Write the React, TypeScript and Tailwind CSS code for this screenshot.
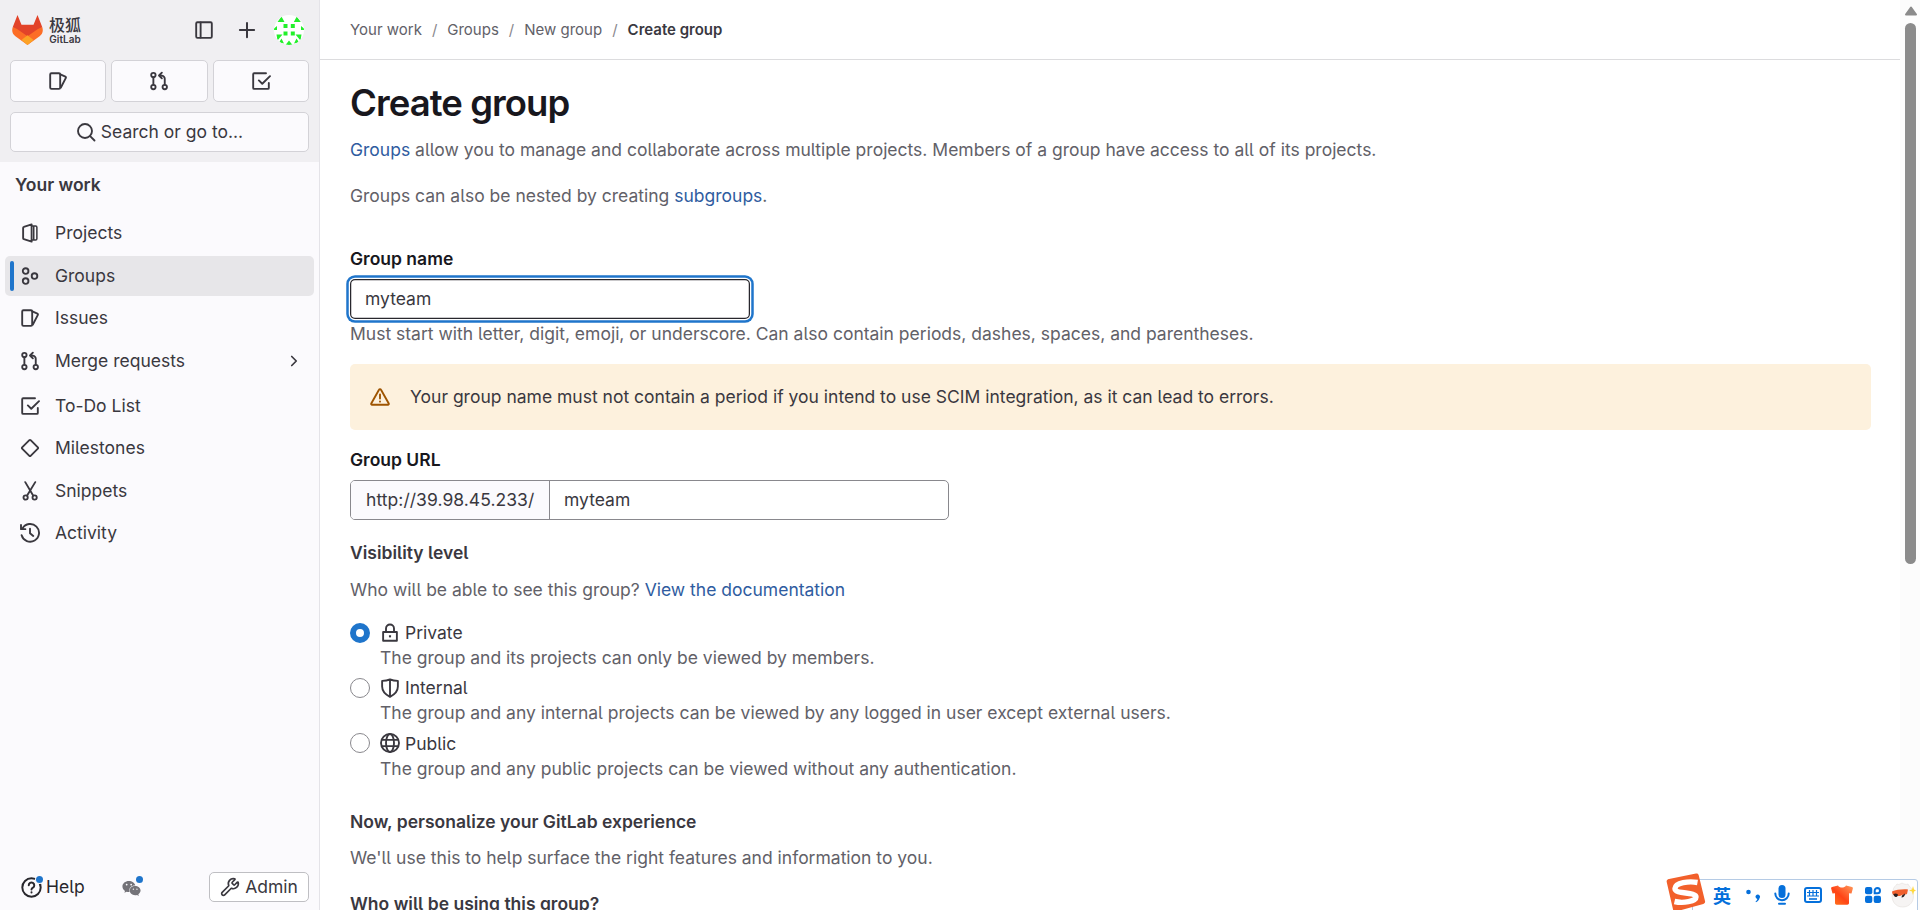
import type { ReactNode } from "react";
import { Wrench } from "lucide-react";
import { FaWeixin } from "react-icons/fa";

function Icon({ children, className = "size-5" }: { children: ReactNode; className?: string }) {
  return (
    <svg
      viewBox="0 0 16 16"
      className={`shrink-0 ${className}`}
      fill="none"
      stroke="currentColor"
      strokeWidth="1.5"
      strokeLinecap="round"
      strokeLinejoin="round"
    >
      {children}
    </svg>
  );
}

const ProjectIcon = () => (
  <Icon>
    <path d="M9.3 1.1 3.1 3.1a.8.8 0 0 0-.6.8v8.2c0 .4.2.7.6.8l6.2 2z" />
    <path d="M9.3 2.4h3.2c.6 0 1 .4 1 1v9.2c0 .6-.4 1-1 1H9.3M11 2.6v10.8" strokeWidth="1.2" />
  </Icon>
);
const GroupIcon = () => (
  <Icon>
    <circle cx="4.5" cy="4" r="2.25" />
    <circle cx="4.5" cy="12" r="2.25" />
    <circle cx="11.6" cy="8" r="2.25" />
  </Icon>
);
const IssuesIcon = () => (
  <Icon>
    <rect x="1.75" y="1.75" width="8" height="12.5" rx="1" />
    <path d="m9.9 2.7 4 1.8c.4.2.6.6.4 1L10.3 13.2" />
  </Icon>
);
const MergeIcon = () => (
  <Icon>
    <circle cx="3.5" cy="3.2" r="1.75" />
    <circle cx="3.5" cy="12.8" r="1.75" />
    <circle cx="12.6" cy="12.8" r="1.75" />
    <path d="M3.5 5v6M12.6 11V6.2a2.5 2.5 0 0 0-2.5-2.5H8.5M10.3 1.3 8 3.6l2.3 2.3" />
  </Icon>
);
const TodoIcon = () => (
  <Icon>
    <path d="M12 1.75H2.5a.75.75 0 0 0-.75.75v11c0 .41.34.75.75.75h11a.75.75 0 0 0 .75-.75V9.5M6.3 7.5 9 10.2l6.2-6.1" />
  </Icon>
);
const MilestoneIcon = () => (
  <Icon>
    <path d="M7.5 1.7a.7.7 0 0 1 1 0l5.8 5.8a.7.7 0 0 1 0 1l-5.8 5.8a.7.7 0 0 1-1 0L1.7 8.5a.7.7 0 0 1 0-1z" />
  </Icon>
);
const SnippetIcon = () => (
  <Icon>
    <path d="m4.2.9 6.3 10.7M12.2.9 5.7 11.6" />
    <circle cx="4.5" cy="13.2" r="1.7" />
    <circle cx="11.7" cy="13.2" r="1.7" />
  </Icon>
);
const ActivityIcon = () => (
  <Icon>
    <path d="M1.3 9.8A7.1 7.1 0 1 0 2 4.3M.8 1.6v3.3h3.5M8 4.5v3.7l2.6 2.2" />
  </Icon>
);

const shortcutButton =
  "flex h-[42px] flex-1 items-center justify-center rounded-[5px] border border-[#d3d2d7] bg-[#fbfafd]";

function Avatar() {
  return (
    <svg viewBox="0 0 30 30" className="size-[30px]">
      <defs>
        <clipPath id="round">
          <circle cx="15" cy="15" r="15" />
        </clipPath>
      </defs>
      <g clipPath="url(#round)">
        <path d="M0 0h30v30H0z" fill="#fff" />
        <path
          fill="#22f02a"
          d="M9.5 9h4v4h-4zM16.8 9h4v4h-4zM9.5 16.5h4v4h-4zM16.8 16.5h4v4h-4zM3.5 7 7.5 1.5 10.5 7zM26.8 7l-4-5.5L19.8 7zM0 15v-1.5l3-2.5v4zM30 15v-1.5l-3-2.5v4zM2.5 19.5h6L3.5 25.5zM27.5 19.5h-6l5 6zM7.5 23.5 10 28.5l-5-1zM22.5 23.5 20 28.5l5-1zM15 25.5l3.5 4.5h-7z"
        />
      </g>
    </svg>
  );
}

function NavItem({ icon, label, active, chevron }: { icon: ReactNode; label: string; active?: boolean; chevron?: boolean }) {
  return (
    <a className={`flex h-10 items-center rounded-[5px] pl-[5px] ${active ? "bg-[#e7e6e9]" : ""}`}>
      <span className={`mr-[6px] h-[30px] w-1 rounded-full ${active ? "bg-[#1f75cb]" : ""}`} />
      {icon}
      <span className="ml-[15px] flex-1 pt-[1px]">{label}</span>
      {chevron && (
        <Icon className="mr-[11px] size-[18px]">
          <path d="m6 4 4 4-4 4" />
        </Icon>
      )}
    </a>
  );
}

function Sidebar() {
  return (
    <aside className="flex w-80 shrink-0 flex-col border-r border-[#e4e3e8] bg-[#fbfafd]">
      <div className="h-[162px] bg-[#f0eff2] px-[10px]">
        <div className="flex h-[60px] items-center pl-[2px]">
          <svg viewBox="0 0 31 30" className="h-[30px] w-[31px]">
            <path fill="#e24329" d="M5.5 0 .7 12.2 15.5 23.5 30.3 12.2 25.5 0l-4 9.7h-12z" />
            <path fill="#fc6d26" d="M.7 12.2C-.6 16.5.8 19.3 3.4 21.3l12.1 8.7 12.1-8.7c2.6-2 4-4.8 2.7-9.1-2.3.5-4.3 1.5-6.2 3l-8.6 6-8.6-6c-1.9-1.5-3.9-2.5-6.2-3z" />
            <path fill="#fca326" d="m15.5 20.2 6 4.8-6 5-6-5z" />
          </svg>
          <div className="ml-[6px] flex w-8 flex-col items-center font-medium text-[#3a383f]">
            <span className="-mt-[1px] mb-[1px] font-['Noto_Sans_CJK_SC',sans-serif] text-[16px] leading-[17px] whitespace-nowrap">极狐</span>
            <span className="text-[10px] leading-[10px] font-semibold">GitLab</span>
          </div>
          <div className="ml-auto flex items-center">
            <Icon>
              <rect x="1.75" y="1.75" width="12.5" height="12.5" rx="1" />
              <path d="M5.3 2v12" />
            </Icon>
            <Icon className="mr-[17px] ml-[23px] size-5">
              <path d="M8 2.3v11.4M2.3 8h11.4" strokeWidth="1.6" />
            </Icon>
            <div className="mr-[5px]">
              <Avatar />
            </div>
          </div>
        </div>
        <div className="flex gap-[5px]">
          <button className={shortcutButton}><IssuesIcon /></button>
          <button className={shortcutButton}><MergeIcon /></button>
          <button className={shortcutButton}><TodoIcon /></button>
        </div>
        <button className="mt-[10px] flex h-10 w-full items-center justify-center gap-[5px] rounded-[5px] border border-[#d3d2d7] bg-[#fbfafd]">
          <Icon>
            <circle cx="7.2" cy="7.2" r="5.6" />
            <path d="m11.3 11.3 3.5 3.5" />
          </Icon>
          Search or go to...
        </button>
      </div>
      <div className="mt-[10px] pl-[15px] leading-[25px] font-semibold">Your work</div>
      <nav className="mt-[16px] flex flex-col gap-[2.5px] px-[5px]">
        <NavItem icon={<ProjectIcon />} label="Projects" />
        <NavItem icon={<GroupIcon />} label="Groups" active />
        <NavItem icon={<IssuesIcon />} label="Issues" />
        <NavItem icon={<MergeIcon />} label="Merge requests" chevron />
        <div className="mt-[2.5px] flex flex-col gap-[2.5px]">
          <NavItem icon={<TodoIcon />} label="To-Do List" />
          <NavItem icon={<MilestoneIcon />} label="Milestones" />
          <NavItem icon={<SnippetIcon />} label="Snippets" />
          <NavItem icon={<ActivityIcon />} label="Activity" />
        </div>
      </nav>
      <div className="mt-auto mb-2 flex h-[30px] items-center pr-[10px] pl-[21px]">
        <div className="relative flex items-center gap-1 text-[#28272d]">
          <Icon className="size-[21px]">
            <circle cx="8" cy="8" r="7" />
            <path d="M5.9 6.3a2.1 2.1 0 1 1 3.2 1.8C8.4 8.5 8 8.8 8 9.5M8 11.7v.1" />
          </Icon>
          Help
          <span className="absolute top-[2px] left-[15px] size-[7px] rounded-full bg-[#1f75cb] ring-1 ring-[#fbfafd]" />
        </div>
        <div className="relative ml-[37px] text-[#737278]">
          <FaWeixin className="mt-[2px] size-[19px]" />
          <span className="absolute -top-[1px] left-[14px] size-[7px] rounded-full bg-[#1f75cb]" />
        </div>
        <button className="ml-auto flex h-[30px] w-[100px] items-center justify-center gap-[5px] rounded-[5px] border border-[#bfbfc3] bg-white">
          <Wrench className="size-5" strokeWidth={2} />
          Admin
        </button>
      </div>
    </aside>
  );
}

function Visibility({ icon, label, text, checked }: { icon: ReactNode; label: string; text: string; checked?: boolean }) {
  return (
    <label className="flex h-[55.25px] gap-[10px] leading-[25px]">
      <span
        className={`mt-[2.75px] size-5 shrink-0 rounded-full bg-white ${checked ? "border-[6px] border-[#1f75cb]" : "border border-[#89888d]"}`}
      />
      <span>
        <span className="flex items-center gap-[5px]">
          {icon}
          {label}
        </span>
        <span className="block text-[#626168]">{text}</span>
      </span>
    </label>
  );
}

const link = "text-[#2f5ca0]";

function Content() {
  return (
    <main className="min-w-0 flex-1">
      <div className="flex h-[60px] items-center gap-[10px] border-b border-[#dcdcde] pt-[2px] pl-[30px] text-[15px] text-[#626168]">
        <span>Your work</span>
        <span className="text-[#89888d]">/</span>
        <span>Groups</span>
        <span className="text-[#89888d]">/</span>
        <span>New group</span>
        <span className="text-[#89888d]">/</span>
        <span className="font-semibold text-[#3a383f]">Create group</span>
      </div>
      <div className="pr-[29px] pl-[30px] leading-[25px]">
        <h1 className="mt-[21px] text-[36.5px] leading-[44px] font-semibold tracking-[-0.026em] text-[#18171d]">
          Create group
        </h1>
        <p className="mt-[12px] text-[#626168]">
          <a className={link}>Groups</a> allow you to manage and collaborate across multiple projects. Members of a group
          have access to all of its projects.
        </p>
        <p className="mt-[21px] text-[#626168]">
          Groups can also be nested by creating <a className={link}>subgroups</a>.
        </p>
        <div className="mt-[38px] font-semibold text-[#18171d]">Group name</div>
        <div className="mt-[8px] flex h-10 w-[400px] items-center rounded-[5px] bg-white px-[15px] pb-[2px] shadow-[inset_0_0_0_1.25px_#28272d,0_0_0_1.25px_#fff,0_0_0_3.75px_#1f75cb]">
          myteam
        </div>
        <p className="mt-[2px] text-[#626168]">
          Must start with letter, digit, emoji, or underscore. Can also contain periods, dashes, spaces, and parentheses.
        </p>
        <div className="mt-[18px] flex h-[66px] items-center gap-5 rounded-[5px] bg-[#fdf1dd] pl-5">
          <Icon className="size-5 text-[#9e5400]">
            <path d="M7.2 2.2a.9.9 0 0 1 1.6 0l6.2 11a.7.7 0 0 1-.6 1H1.6a.7.7 0 0 1-.6-1zM8 6v3.2M8 11.6v.1" />
          </Icon>
          <span className="pb-[2px]">
            Your group name must not contain a period if you intend to use SCIM integration, as it can lead to errors.
          </span>
        </div>
        <div className="mt-[17px] font-semibold text-[#18171d]">Group URL</div>
        <div className="mt-[8px] flex h-10 w-[599px] overflow-hidden rounded-[5px] border border-[#89888d]">
          <div className="flex w-[199px] items-center border-r border-[#89888d] bg-[#fbfafd] pb-[2px] pl-[15px] tracking-[0.05px]">
            http://39.98.45.233/
          </div>
          <div className="flex flex-1 items-center pb-[2px] pl-[14px]">myteam</div>
        </div>
        <div className="mt-[20px] font-semibold">Visibility level</div>
        <p className="mt-[12px] text-[#626168]">
          Who will be able to see this group? <a className={link}>View the documentation</a>
        </p>
        <div className="mt-[18px]">
          <Visibility
            checked
            label="Private"
            text="The group and its projects can only be viewed by members."
            icon={
              <Icon>
                <path d="M2.5 7.2h11v7h-11zM4.8 7V4.4a3.2 3.2 0 0 1 6.4 0V7" />
                <path d="M8 9.8v1.7" strokeLinecap="butt" strokeWidth="1.7" />
              </Icon>
            }
          />
          <Visibility
            label="Internal"
            text="The group and any internal projects can be viewed by any logged in user except external users."
            icon={
              <Icon>
                <path d="M8 1.1c2 .9 4.2 1.2 6.3 1.2v4.5c0 4-2.8 6.5-6.3 8.3-3.5-1.8-6.3-4.3-6.3-8.3V2.3C3.8 2.3 6 2 8 1.1zM8 1.1v14" />
              </Icon>
            }
          />
          <Visibility
            label="Public"
            text="The group and any public projects can be viewed without any authentication."
            icon={
              <Icon>
                <circle cx="8" cy="8" r="7.2" />
                <ellipse cx="8" cy="8" rx="3.2" ry="7.2" />
                <path d="M1.5 5.5h13M1.5 10.5h13" />
              </Icon>
            }
          />
        </div>
        <div className="mt-[23.25px] font-semibold">Now, personalize your GitLab experience</div>
        <p className="mt-[11px] text-[#626168]">We'll use this to help surface the right features and information to you.</p>
        <div className="mt-[21px] font-semibold">Who will be using this group?</div>
      </div>
    </main>
  );
}

function Scrollbar() {
  return (
    <div className="flex w-5 shrink-0 flex-col items-center bg-[#fcfcfc] pl-[1px]">
      <svg viewBox="0 0 14 10" className="mt-[6px] h-[10px] w-[14px]">
        <path d="M7 1.5 12 8.5H2z" fill="#8b8b8b" stroke="#8b8b8b" strokeWidth="2" strokeLinejoin="round" />
      </svg>
      <div className="mt-[7px] h-[541px] w-[11px] rounded-full bg-[#8b8b8b]" />
    </div>
  );
}

function InputMethodBar() {
  return (
    <div className="absolute right-0 bottom-0 h-[37px] w-[254px]">
      <div className="absolute top-[6px] right-[2px] flex h-[40px] w-[226px] items-start rounded-[3px] border border-[#b5cbe5] bg-white pt-[5px] pl-[20px] text-[#0570db]">
        <span className="-mt-[1px] w-[18px] font-['Noto_Sans_CJK_SC',sans-serif] text-[18px] leading-[22px] font-bold">英</span>
        <svg viewBox="0 0 16 16" className="mt-[4px] ml-[14px] size-4" fill="currentColor">
          <circle cx="3.5" cy="3" r="2.3" />
          <path d="M10.5 7.3a2.3 2.3 0 1 1 4 2c-.4 1.8-1.6 3-3.5 3.9l-.5-.8c1.1-.7 1.7-1.6 1.8-2.5-1.1-.2-1.9-1.3-1.8-2.6z" />
        </svg>
        <svg viewBox="0 0 16 20" className="ml-[13px] h-5 w-4" fill="none" stroke="currentColor" strokeWidth="2">
          <rect x="4.5" y="0" width="7" height="13" rx="3.5" fill="currentColor" stroke="none" />
          <path d="M1.3 8.5a6.7 6.7 0 0 0 13.4 0M5 18.8h6" strokeLinecap="round" />
        </svg>
        <svg viewBox="0 0 18 16" className="mt-[2px] ml-[14px] h-4 w-[18px]" fill="none" stroke="currentColor">
          <rect x="1" y="1" width="16" height="14" rx="2" strokeWidth="2" />
          <path d="M3 5.5h12M3 9h12M5.5 3v6M9 3v6M12.5 3v6" strokeWidth="1.2" />
          <path d="M5 12h8" strokeWidth="1.6" />
        </svg>
        <svg viewBox="0 0 22 20" className="ml-[9px] h-5 w-[22px]">
          <defs>
            <linearGradient id="shirt" x1="0" y1="1" x2="1" y2="0">
              <stop offset="0" stopColor="#ff7a1c" />
              <stop offset=".45" stopColor="#ff4416" />
              <stop offset="1" stopColor="#ff9a5c" />
            </linearGradient>
          </defs>
          <path fill="url(#shirt)" d="M7 .5c1.5 2.8 6.5 2.8 8 0l6 1.5c.8.2 1 1 .8 1.7L20.5 8.5l-2.5-.3V18c0 1-.7 1.7-1.7 1.7H5.7C4.7 19.7 4 19 4 18V8.2l-2.5.3L.2 3.7C0 3 .2 2.2 1 2z" />
        </svg>
        <svg viewBox="0 0 16 16" className="mt-[2px] ml-[12px] size-4" fill="currentColor">
          <rect x="0" y="0" width="7.3" height="7.3" rx="2" />
          <rect x="0" y="8.7" width="7.3" height="7.3" rx="2" />
          <rect x="8.7" y="8.7" width="7.3" height="7.3" rx="2" />
          <path d="M12.4 1a2.7 2.7 0 0 1 2.6 2.7A2.6 2.6 0 0 1 12.4 6.3H9.7V3.7A2.7 2.7 0 0 1 12.4 1z" fill="none" stroke="currentColor" strokeWidth="2" />
        </svg>
        <svg viewBox="0 0 26 26" className="-mt-[3px] ml-[9px] h-[26px] w-[26px] shrink-0">
          <path d="M3 9C3 5 6 4 7 2c2 1 3 0 5-1 2 1 4 2 6 1 1 3 5 4 5 9 2 8-3 14-10.5 14S0 18 3 9z" fill="#f6f4f3" stroke="#e6e2e0" strokeWidth=".7" />
          <path d="M2 9.500c4-1.500 10-2.500 16-2l-1 4.500c-2 1-4 .5-5 1-1 1-3 1-5.500 1C3.500 14 2 12 2 9.500z" fill="#f0602e" />
          <path d="M3.500 12c1.500-.7 3-.7 4 0s0 3-1.500 3-2.500-1.500-2.500-3zM12 13.500l3-2c0 2.500-1.500 4-3.500 4z" fill="#2a2020" />
          <path d="m23 4 1 3.500 2 1-2 1-1 3.500-1-3.500-3-1 3-1z" fill="#ffd83a" />
        </svg>
      </div>
      <svg viewBox="0 0 40 37" className="absolute top-0 left-0 h-[37px] w-10">
        <path d="M3 6 30 .6c1.3-.3 2.4.4 2.7 1.7L39 28c.4 1.5-.3 2.5-1.7 2.9L10 38.5c-1.5.3-2.500-.3-2.900-1.700L.7 9C.4 7.500 1.200 6.400 3 6z" fill="#f2602b" />
        <path d="M31.500 9.500C23 8 9.500 9.500 9 15.500c-.4 6 21 3 21 8.500 0 4.500-13 6.500-21.500 4.500" fill="none" stroke="#fff" strokeWidth="5.4" />
      </svg>
    </div>
  );
}

export default function App() {
  return (
    <div className="relative flex h-[910px] w-full overflow-hidden bg-white font-['Inter','Liberation_Sans',sans-serif] text-[17.5px] text-[#3a383f] [font-feature-settings:'cv05'_1]">
      <Sidebar />
      <Content />
      <Scrollbar />
      <InputMethodBar />
    </div>
  );
}
